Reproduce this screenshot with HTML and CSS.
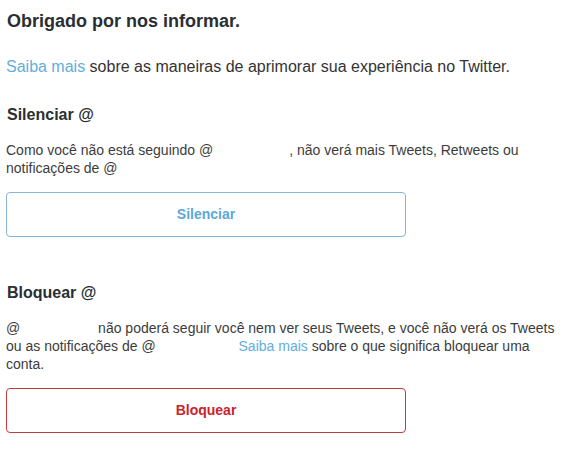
FILE: index.html
```html
<!DOCTYPE html>
<html lang="pt-BR">
<head>
    <meta charset="UTF-8">
    <title>Obrigado por nos informar</title>
    <link rel="stylesheet" href="styles.css">
</head>
<body>
<div class="report">
    <h1 class="title">Obrigado por nos informar.</h1>
    <p class="intro"><a href="javascript:;" class="link">Saiba mais</a> sobre as maneiras de aprimorar sua experiência no Twitter.</p>

    <div class="block">
        <h2 class="blockTit">Silenciar @</h2>
        <p class="desc">Como você não está seguindo @<span class="handle"></span>, não verá mais Tweets, Retweets ou notificações de @</p>
        <a href="javascript:;" class="btn btnMute">Silenciar</a>
    </div>

    <div class="block">
        <h2 class="blockTit">Bloquear @</h2>
        <p class="desc">@<span class="handle handleA"></span> não poderá seguir você nem ver seus Tweets, e você não verá os Tweets ou as notificações de @<span class="handle handleB"></span> <a href="javascript:;" class="link">Saiba mais</a> sobre o que significa bloquear uma conta.</p>
        <a href="javascript:;" class="btn btnBlock">Bloquear</a>
    </div>
</div>
</body>
</html>
```

FILE: styles.css
```css
*{margin: 0; padding: 0}
a{text-decoration: none}
body{background: #fff; font-family: "Liberation Sans", Arial, sans-serif; color: #333}
.report{width: 562px; padding: 10px 6px}
.title{font-size: 18px; font-weight: 700; line-height: 22px; color: #292f33; padding-left: 1px}
.intro{margin-top: 25px; font-size: 16px; line-height: 20px; color: #333}
.link{color: #62aedb}
.block{margin-top: 28px}
.block + .block{margin-top: 46px}
.blockTit{font-size: 16px; font-weight: 700; line-height: 20px; color: #292f33; padding-left: 1px}
.desc{margin-top: 16px; font-size: 14px; line-height: 18px; color: #3c3c3c}
.handle{display: inline-block; width: 76px}
.handleA{width: 74px}
.handleB{width: 79px}
.btn{display: block; width: 398px; height: 43px; margin-top: 15px; border: 1px solid; border-radius: 4px;
    text-align: center; font-size: 14px; font-weight: 700; line-height: 43px}
.btnMute{border-color: #86b6d4; color: #5ba8d8}
.btnBlock{border-color: #bd3c40; color: #c8242c}
```
